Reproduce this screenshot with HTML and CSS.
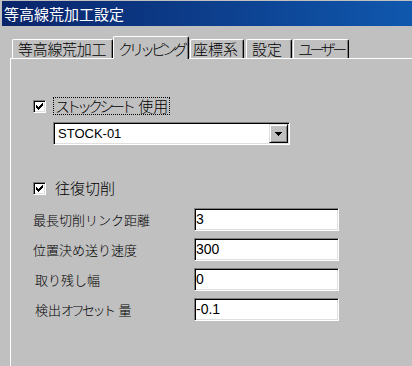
FILE: index.html
```html
<!DOCTYPE html>
<html>
    <head>
        <title>等高線荒加工設定</title>
        <meta charset="utf-8"/>
        <link rel="stylesheet" href="styles.css">
    </head>
    <body>
        <div class="window">
            <div class="titlebar">等高線荒加工設定</div>

            <div class="tabstrip">
                <div class="tab tab-1">等高線荒加工</div>
                <div class="tab tab-2 active">クリッピング</div>
                <div class="tab tab-3">座標系</div>
                <div class="tab tab-4">設定</div>
                <div class="tab tab-5">ユーザー</div>
            </div>

            <div class="panel">
                <label class="check check-stock">
                    <span class="box">
                        <svg width="7" height="7" viewBox="0 0 7 7"><path d="M0 2h1v3h-1z M1 3h1v3h-1z M2 4h1v3h-1z M3 3h1v3h-1z M4 2h1v3h-1z M5 1h1v3h-1z M6 0h1v3h-1z" fill="#000"/></svg>
                    </span>
                    <span class="check-text focus"><span class="kana">ストックシート</span> 使用</span>
                </label>

                <div class="combo">
                    <span class="combo-text">STOCK-01</span>
                    <span class="combo-btn">
                        <svg width="7" height="4" viewBox="0 0 7 4"><path d="M0 0h7v1h-1v1h-1v1h-1v1h-1v-1h-1v-1h-1v-1h-1z" fill="#000"/></svg>
                    </span>
                </div>

                <label class="check check-return">
                    <span class="box">
                        <svg width="7" height="7" viewBox="0 0 7 7"><path d="M0 2h1v3h-1z M1 3h1v3h-1z M2 4h1v3h-1z M3 3h1v3h-1z M4 2h1v3h-1z M5 1h1v3h-1z M6 0h1v3h-1z" fill="#000"/></svg>
                    </span>
                    <span class="check-text">往復切削</span>
                </label>

                <div class="fields">
                    <span class="field-label">最長切削リンク距離</span>
                    <div class="input">3</div>

                    <span class="field-label">位置決め送り速度</span>
                    <div class="input">300</div>

                    <span class="field-label indent">取り残し幅</span>
                    <div class="input">0</div>

                    <span class="field-label indent">検出<span class="kana">オフセット</span> 量</span>
                    <div class="input">-0.1</div>
                </div>
            </div>
        </div>
    </body>
</html>
```

FILE: styles.css
```css
* {
    box-sizing: border-box;
}
html, body {
    margin: 0;
    padding: 0;
    height: 100%;
    overflow: hidden;
    background: #c0c0c0;
    color: #000;
    font-family: "Noto Sans CJK JP", sans-serif;
    font-size: 15px;
    font-weight: 300;
}

.window {
    height: 100%;
    display: flex;
    flex-direction: column;
}

.titlebar {
    height: 25px;
    margin: 1px 0 0 2px;
    padding: 3px 0 0 2px;
    line-height: 20px;
    color: #fff;
    font-weight: 400;
    background: linear-gradient(to right, #0a246a, #0f58ae);
}

/* tabs */
.tabstrip {
    display: flex;
    align-items: flex-end;
    margin: 10px 0 0 12px;
}
.tab {
    height: 19px;
    padding-left: 5px;
    line-height: 17px;
    white-space: nowrap;
    overflow: hidden;
    border-top: 1px solid #fff;
    border-left: 1px solid #fff;
    border-right: 1px solid #000;
    border-top-left-radius: 2px;
    border-top-right-radius: 2px;
    box-shadow: inset -1px 0 #808080;
}
.tab.active {
    position: relative;
    height: 23px;
    margin-bottom: -1px;
    padding-top: 3px;
    background: #c0c0c0;
}
.tab-1 { width: 101px; letter-spacing: -0.3px; }
.tab-2 { width: 76px; margin-right: 1px; padding-left: 4px; letter-spacing: -4px; }
.tab-3 { width: 54px; margin-right: 2px; padding-left: 2px; }
.tab-4 { width: 46px; margin-right: 1px; }
.tab-5 { width: 56px; padding-left: 4px; letter-spacing: -3.5px; }

.panel {
    flex: 1;
    margin-left: 10px;
    padding-left: 22px;
    border-top: 1px solid #fff;
    border-left: 1px solid #fff;
}

.kana {
    letter-spacing: -4px;
    margin-right: 3px;
}

/* check boxes */
.check {
    display: flex;
    align-items: center;
    height: 18px;
}
.check-stock {
    margin-top: 38px;
}
.check-return {
    margin-top: 34px;
}
.box {
    width: 13px;
    height: 13px;
    padding: 2px;
    background: #fff;
    border: 1px solid;
    border-color: #808080 #fff #fff #808080;
    box-shadow: inset 1px 1px #000, inset -1px -1px #dfdfdf;
}
.box svg {
    display: block;
}
.check-text {
    margin-left: 7px;
    padding: 0 1px;
    line-height: 16px;
    white-space: nowrap;
    border: 1px dotted transparent;
}
.check-text.focus {
    border-color: #000;
}

/* combo box */
.combo {
    display: flex;
    width: 237px;
    height: 23px;
    margin: 7px 0 0 20px;
    padding: 1px;
    background: #fff;
    border: 1px solid;
    border-color: #808080 #fff #fff #808080;
    box-shadow: inset 1px 1px #000, inset -1px -1px #dfdfdf;
}
.combo-text {
    flex: 1;
    padding-left: 3px;
    font-family: "Liberation Sans", sans-serif;
    font-size: 13px;
    font-weight: 400;
    line-height: 19px;
}
.combo-btn {
    width: 19px;
    display: flex;
    align-items: center;
    justify-content: center;
    background: #c0c0c0;
    border: 1px solid;
    border-color: #dfdfdf #000 #000 #dfdfdf;
    box-shadow: inset 1px 1px #fff, inset -1px -1px #808080;
}
.combo-btn svg {
    display: block;
    margin-top: 1px;
}

/* numeric fields */
.fields {
    display: grid;
    grid-template-columns: 161px 145px;
    row-gap: 7px;
    align-items: center;
    margin-top: 11px;
}
.field-label {
    font-size: 13px;
    white-space: nowrap;
}
.field-label .kana {
    letter-spacing: -2.5px;
    margin-right: 2px;
}
.field-label.indent {
    padding-left: 2px;
}
.input {
    height: 23px;
    padding-left: 1px;
    background: #fff;
    border: 1px solid;
    border-color: #808080 #fff #fff #808080;
    box-shadow: inset 1px 1px #000, inset -1px -1px #dfdfdf;
    font-family: "Liberation Sans", sans-serif;
    font-size: 14px;
    font-weight: 400;
    line-height: 20px;
}
```
